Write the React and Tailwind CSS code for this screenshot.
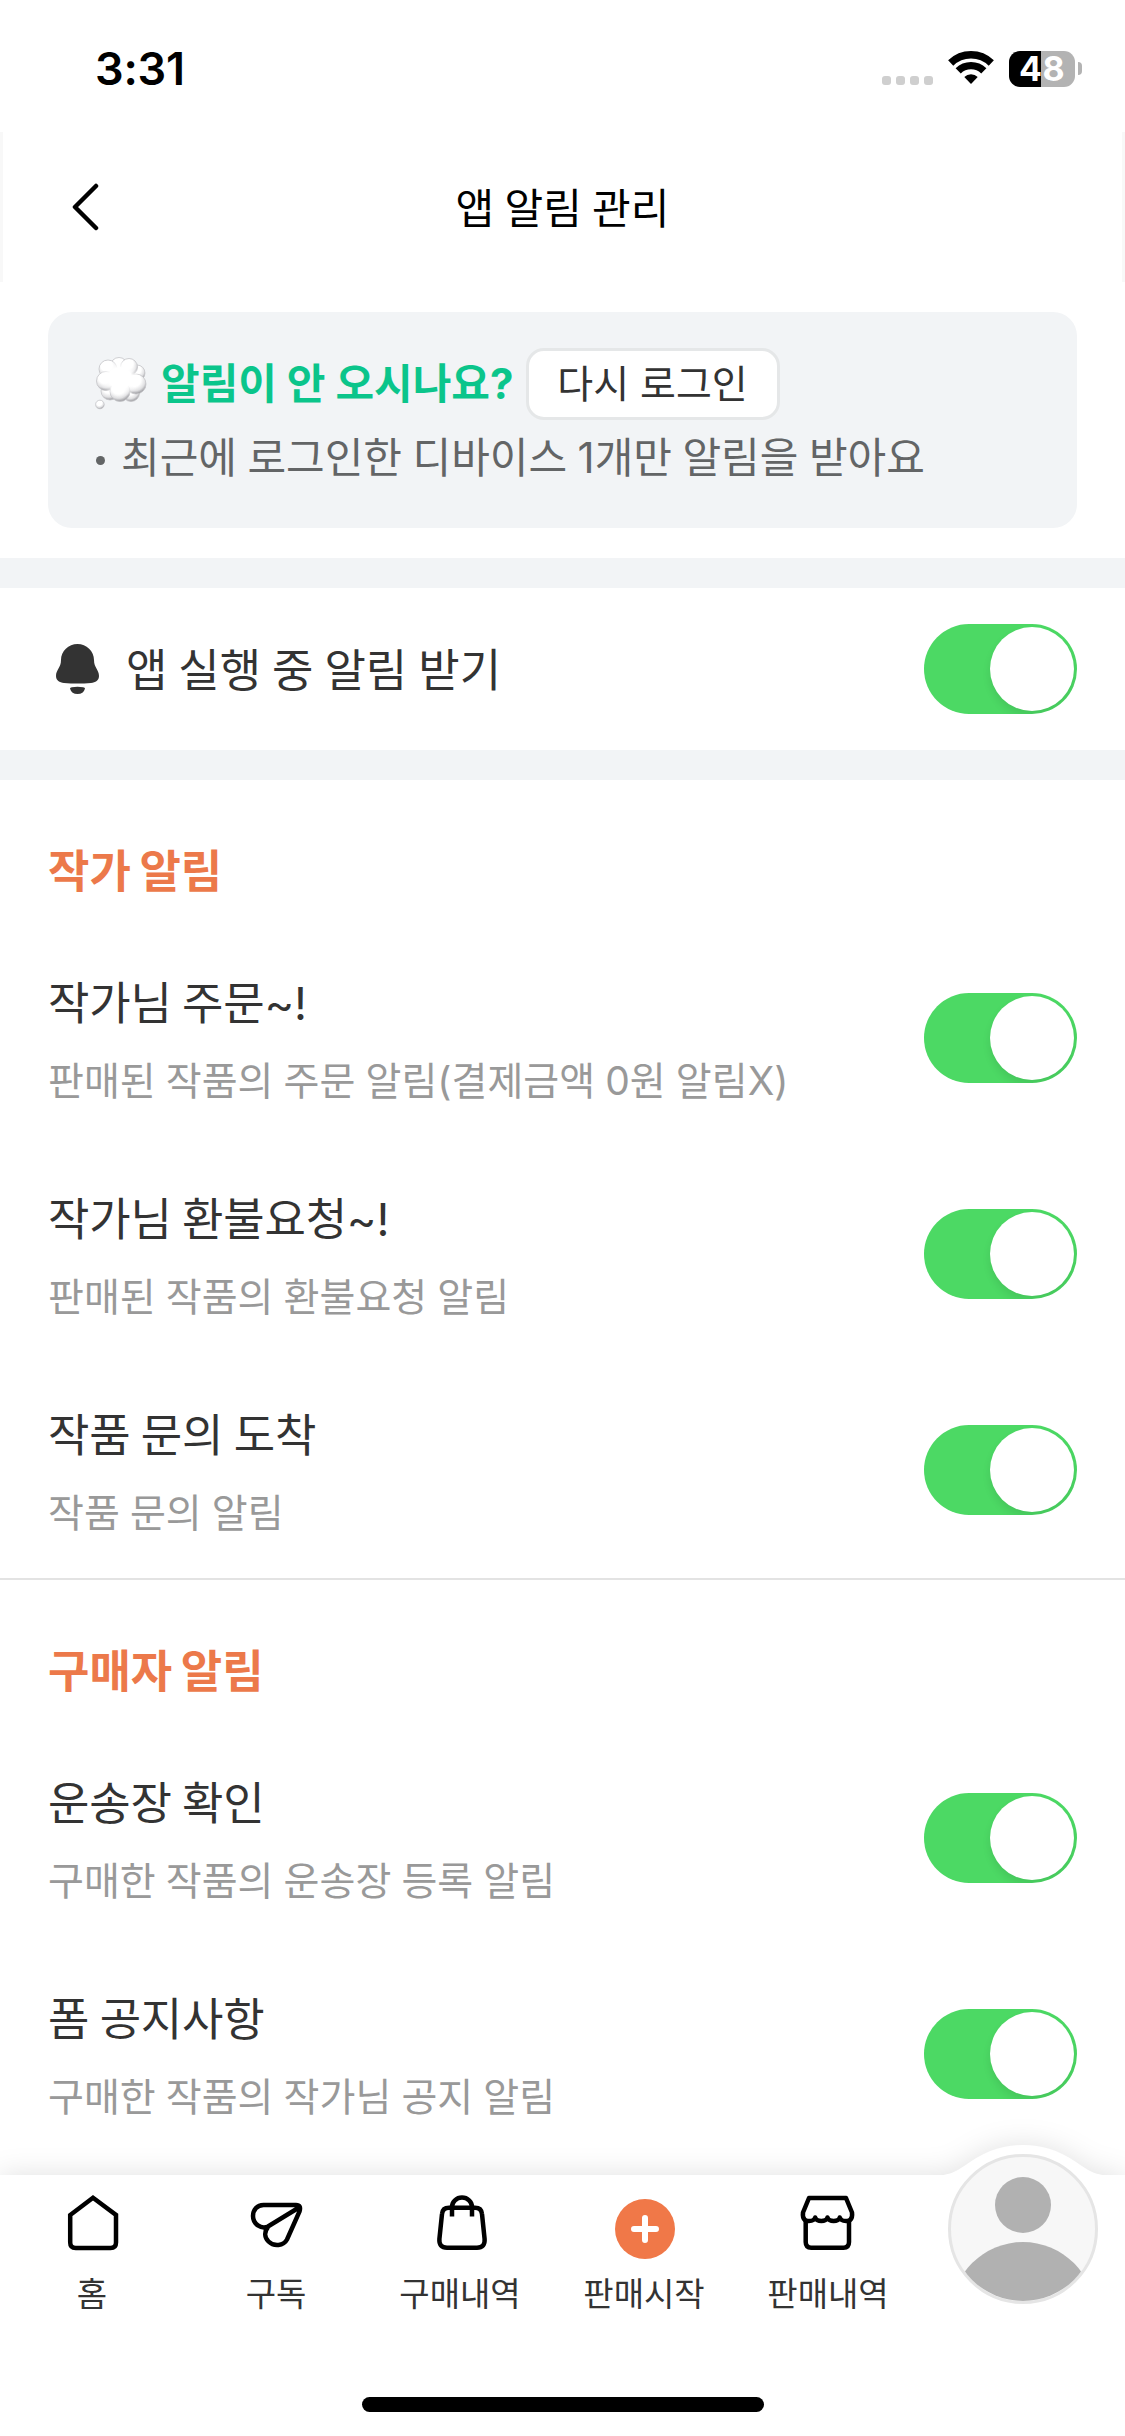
const ARTIST = [
  { title: '작가님 주문~!', desc: '판매된 작품의 주문 알림(결제금액 0원 알림X)' },
  { title: '작가님 환불요청~!', desc: '판매된 작품의 환불요청 알림' },
  { title: '작품 문의 도착', desc: '작품 문의 알림' },
];

const BUYER = [
  { title: '운송장 확인', desc: '구매한 작품의 운송장 등록 알림' },
  { title: '폼 공지사항', desc: '구매한 작품의 작가님 공지 알림' },
];

function WifiIcon() {
  return (
    <svg width="46" height="34" viewBox="0 0 46 34" fill="none" stroke="#000" strokeWidth="7.4">
      <path d="M2.7 12A29.2 29.2 0 0 1 43.3 12" />
      <path d="M10.2 19.8A18.4 18.4 0 0 1 35.8 19.8" />
      <path d="M23 33L16.3 26A9.7 9.7 0 0 1 29.7 26Z" fill="#000" stroke="none" />
    </svg>
  );
}

function CloudIcon() {
  return (
    <svg width="52" height="54" viewBox="0 0 52 54">
      <defs>
        <radialGradient id="puff" cx="0.42" cy="0.3" r="0.72">
          <stop offset="0.45" stopColor="#fff" />
          <stop offset="0.75" stopColor="#e0e0e2" />
          <stop offset="1" stopColor="#8f8f94" />
        </radialGradient>
        <radialGradient id="puffCore">
          <stop offset="0.55" stopColor="#fff" />
          <stop offset="1" stopColor="#fff" stopOpacity="0" />
        </radialGradient>
      </defs>
      <g fill="url(#puff)" stroke="#c4c4c8" strokeWidth="0.8">
        <circle cx="24" cy="9" r="8.5" />
        <circle cx="42" cy="16" r="8" />
        <circle cx="34" cy="10" r="8.5" />
        <circle cx="13" cy="12" r="9" />
        <circle cx="15" cy="34" r="9" />
        <circle cx="36" cy="36" r="8.500" />
        <circle cx="11" cy="24" r="9.5" />
        <circle cx="41" cy="27" r="10" />
        <circle cx="25" cy="34.500" r="10" />
        <circle cx="4.9" cy="47.5" r="4.3" />
      </g>
      <ellipse cx="25" cy="21" rx="21" ry="19" fill="url(#puffCore)" />
    </svg>
  );
}

function BellIcon() {
  return (
    <svg width="43" height="50" viewBox="0 0 43 50" fill="#333">
      <path d="M21.5 0C30.5 0 38 7 38 16C38 24 43 25.5 43 32C43 36.5 39.5 38.5 35 39Q21.5 40 8 39C3.5 38.5 0 36.5 0 32C0 25.5 5 24 5 16C5 7 12.5 0 21.5 0Z" />
      <path d="M14 44.5Q14 42.8 21.5 42.8Q29 42.8 29 44.5Q27.5 50 21.5 50Q15.5 50 14 44.5Z" />
    </svg>
  );
}

function LineIcon({ children }) {
  return (
    <svg width="60" height="60" viewBox="0 0 60 60" fill="none" stroke="#000" strokeWidth="4.5">
      {children}
    </svg>
  );
}

function Toggle() {
  return (
    <span className="flex h-[90px] w-[153px] shrink-0 items-center justify-end overflow-hidden rounded-full bg-[#4cd964] pr-[3px]">
      <span className="h-[84px] w-[84px] rounded-full bg-white shadow-[0_5px_9px_rgba(0,0,0,0.09)]" />
    </span>
  );
}

function Row({ title, desc }) {
  return (
    <div className="flex h-[216px] items-center justify-between px-12">
      <div className="pt-[7px] whitespace-nowrap">
        <div className="text-[45px] leading-[78px] tracking-[-0.2px] text-[#333] [word-spacing:-2px]">{title}</div>
        <div className="text-[39px] leading-[76px] text-[#999] [word-spacing:-0.8px]">{desc}</div>
      </div>
      <Toggle />
    </div>
  );
}

function Section({ heading, rows }) {
  return (
    <section className="border-b-2 border-[#e3e3e3] last:border-b-0">
      <h2 className="h-[150px] px-12 pt-14 text-[45px] leading-[72px] font-bold text-[#ec794a] [word-spacing:-2px]">{heading}</h2>
      {rows.map((r) => <Row key={r.title} {...r} />)}
    </section>
  );
}

function Tab({ label, children }) {
  return (
    <div className="flex w-[184px] flex-col items-center pt-[18px]">
      {children}
      <span className="mt-[17px] text-[33px] leading-[48px] text-[#333]">{label}</span>
    </div>
  );
}

function StatusBar() {
  return (
    <div className="flex h-[132px] items-start justify-between pr-[43px] pl-[95px]">
      <span className="pt-[42px] text-[45px] leading-[54px] font-semibold tracking-[-0.2px]">3:31</span>
      <div className="flex pt-[51px]">
        <div className="flex gap-[5px] pt-[25px]">
          {[0, 1, 2, 3].map((i) => <i key={i} className="h-[9px] w-[9px] rounded-[3px] bg-[#cfcfcf]" />)}
        </div>
        <div className="ml-[15px]"><WifiIcon /></div>
        <div className="ml-[15px] flex h-9 w-[66px] items-center justify-center rounded-[11px] bg-linear-to-r from-black from-[48%] to-[#b3b3b3] to-[48%] text-[34px] leading-[36px] font-bold tracking-[0.5px] text-white">48</div>
        <div className="mt-[11px] ml-[3px] h-[13px] w-1 rounded-r-full bg-[#b3b3b3]" />
      </div>
    </div>
  );
}

export default function App() {
  return (
    <div className="flex h-[2436px] w-[1125px] flex-col overflow-hidden bg-white font-['Inter','Noto_Sans_CJK_KR',sans-serif]">
      <StatusBar />
      <header className="grid h-[150px] grid-cols-[1fr_auto_1fr] items-center border-x-[3px] border-[#f8f8f8] pl-[68px]">
        <svg width="28" height="48" viewBox="0 0 28 48" fill="none" stroke="#000" strokeWidth="4.5" strokeLinecap="round" strokeLinejoin="round">
          <path d="M25 3L4 24L25 45" />
        </svg>
        <h1 className="-ml-[68px] pt-[3px] text-[42px] leading-[60px] text-black [word-spacing:-1.5px]">앱 알림 관리</h1>
      </header>

      <main className="h-[1893px] shrink-0 overflow-hidden">
        <div className="mx-12 mt-[30px] h-[216px] rounded-[24px] bg-[#f2f4f6] px-[47px] pt-9 whitespace-nowrap">
          <div className="flex h-[72px] items-center">
            <CloudIcon />
            <b className="ml-[14px] text-[42px] leading-[60px] font-bold text-[#0bc58b]">알림이 안 오시나요?</b>
            <button className="ml-[12px] h-[72px] w-[254px] rounded-[18px] border-[3px] border-[#e5e7e8] bg-white text-[39px] leading-[60px] text-[#333]">다시 로그인</button>
          </div>
          <div className="flex items-center text-[42px] leading-[76px] text-[#636566] [word-spacing:-1.3px]">
            <i className="mt-[5px] mr-[16px] ml-px h-[9px] w-[9px] rounded-full bg-[#636566]" />
            최근에 로그인한 디바이스 1개만 알림을 받아요
          </div>
        </div>
        <div className="mt-[30px] h-[30px] bg-[#f2f4f6]" />
        <div className="flex h-[162px] items-center pr-12 pl-14">
          <BellIcon />
          <span className="mr-auto ml-[27px] pt-[3px] text-[45px] leading-[78px] text-[#333] [word-spacing:-1.7px]">앱 실행 중 알림 받기</span>
          <Toggle />
        </div>
        <div className="h-[30px] bg-[#f2f4f6]" />
        <div>
          <Section heading="작가 알림" rows={ARTIST} />
          <Section heading="구매자 알림" rows={BUYER} />
        </div>
      </main>

      <nav className="relative h-[261px] shrink-0 bg-white [filter:drop-shadow(0_0_14px_rgba(0,0,0,0.12))]">
        <svg className="absolute -top-[30px] left-[930px]" width="186" height="31" viewBox="0 0 186 31" fill="#fff">
          <path d="M0 31C22 31 28 25 40 17C58 5 74 0 93 0C112 0 128 5 146 17C158 25 164 31 186 31Z" />
        </svg>
        <div className="flex">
          <Tab label="홈">
            <LineIcon><path d="M31 4.8L8.2 22V49.5Q8.2 55 13.7 55H48.5Q54 55 54 49.5V22Z" /></LineIcon>
          </Tab>
          <Tab label="구독">
            <LineIcon>
              <path d="M22 34C18 39 18.5 44.5 22.5 48.5C28 54 37.5 53 41 46.5L53.5 18.5Q55.5 12 50 12H17.5C11 12 7 17 7 23C7 31 15 36.5 22 33.5L53 14.5" />
            </LineIcon>
          </Tab>
          <Tab label="구매내역">
            <LineIcon>
              <path d="M19 14.7H45Q51.5 14.7 52 21L54.6 46Q55.3 54.7 47 54.7H17Q8.7 54.7 9.4 46L12 21Q12.5 14.7 19 14.7Z" />
              <path d="M22 23.5V14a10 9.5 0 0 1 20 0V23.5" />
            </LineIcon>
          </Tab>
          <Tab label="판매시작">
            <svg className="mt-[6px] -mb-[6px] ml-px" width="60" height="60" viewBox="0 0 60 60">
              <circle cx="30" cy="30" r="30" fill="#f07848" />
              <path d="M30 19V41M19 30H41" stroke="#fff" strokeWidth="6" strokeLinecap="round" />
            </svg>
          </Tab>
          <Tab label="판매내역">
            <LineIcon>
              <path strokeLinejoin="round" d="M11 5H48L54 19.5C55 27 50.5 28.5 48 28C44.500 28 42.500 27 41.8 24.500a6.2 4 0 0 1 -12.3 0a6.2 4 0 0 1 -12.3 0C16.500 27 14.500 28 11 28C8.500 28.500 4 27 5 19.5Z" />
              <path d="M7.7 27V49Q7.7 54.7 13.2 54.7H45.5Q51 54.7 51 49V27" />
            </LineIcon>
          </Tab>
          <div className="relative -mt-[21px] ml-[28px]">
            <svg width="150" height="150" viewBox="0 0 150 150">
              <clipPath id="avatar"><circle cx="75" cy="75" r="72" /></clipPath>
              <circle cx="75" cy="75" r="73.5" fill="#f7f7f7" stroke="#e5e5e5" strokeWidth="3" />
              <g fill="#b1b1b1" clipPath="url(#avatar)">
                <circle cx="75" cy="51" r="28" />
                <circle cx="75" cy="160" r="72" />
              </g>
            </svg>
          </div>
        </div>
        <div className="mx-auto mt-[79px] h-[15px] w-[402px] rounded-full bg-black" />
      </nav>
    </div>
  );
}
